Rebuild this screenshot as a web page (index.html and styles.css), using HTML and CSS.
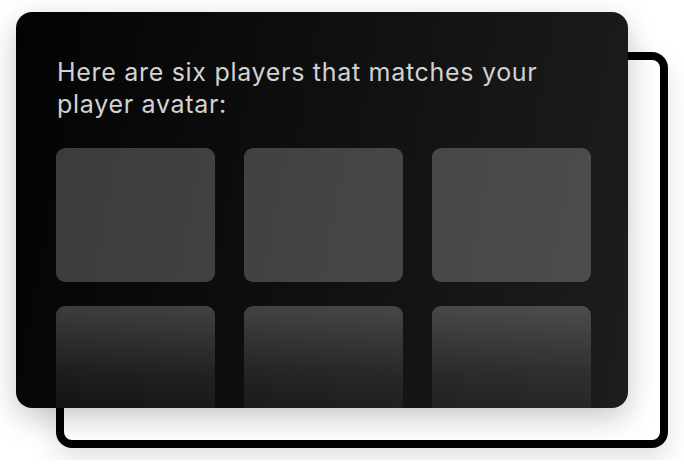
FILE: index.html
```html
<!DOCTYPE html>
<html lang="en">
<head>
<meta charset="utf-8">
<title>Player matches</title>
<link rel="stylesheet" href="styles.css">
</head>
<body>
<div class="stack">
  <div class="back-card"></div>
  <div class="front-card">
    <p class="intro">Here are six players that matches your player avatar:</p>
    <div class="grid">
      <div class="tile"></div>
      <div class="tile"></div>
      <div class="tile"></div>
      <div class="tile tile-fade"></div>
      <div class="tile tile-fade"></div>
      <div class="tile tile-fade"></div>
    </div>
  </div>
</div>
</body>
</html>
```
FILE: styles.css
```css
html, body {
  margin: 0;
  padding: 0;
  background: #ffffff;
}
body {
  font-family: Inter, "Noto Sans", sans-serif;
}
.stack {
  display: grid;
  padding: 12px 16px;
}
.back-card,
.front-card {
  grid-area: 1 / 1;
  width: 612px;
  height: 396px;
  box-sizing: border-box;
  border-radius: 16px;
}
.back-card {
  margin: 40px 0 0 40px;
  border: 8px solid #000;
  background: #fff;
  box-shadow: 0 12px 28px rgba(0, 0, 0, 0.12);
}
.front-card {
  overflow: hidden;
  padding: 44px 37px 0 41px;
  background: linear-gradient(100deg, #030303 0%, #101010 50%, #1d1d1d 100%);
  box-shadow: 0 10px 30px rgba(0, 0, 0, 0.22);
}
.intro {
  margin: 0;
  max-width: 500px;
  color: #d2d2d2;
  font-size: 25px;
  line-height: 32px;
  font-weight: 400;
  letter-spacing: 0.7px;
}
.grid {
  margin: 28px 0 0 -1px;
  display: grid;
  grid-template-columns: repeat(3, 159px);
  grid-auto-rows: 134px;
  column-gap: 29px;
  row-gap: 24px;
}
.tile {
  border-radius: 9px;
  background: rgba(255, 255, 255, 0.22);
}
.tile-fade {
  background: linear-gradient(180deg, rgba(255, 255, 255, 0.22) 0%, rgba(255, 255, 255, 0.09) 50%, rgba(255, 255, 255, 0.01) 100%);
}
```
